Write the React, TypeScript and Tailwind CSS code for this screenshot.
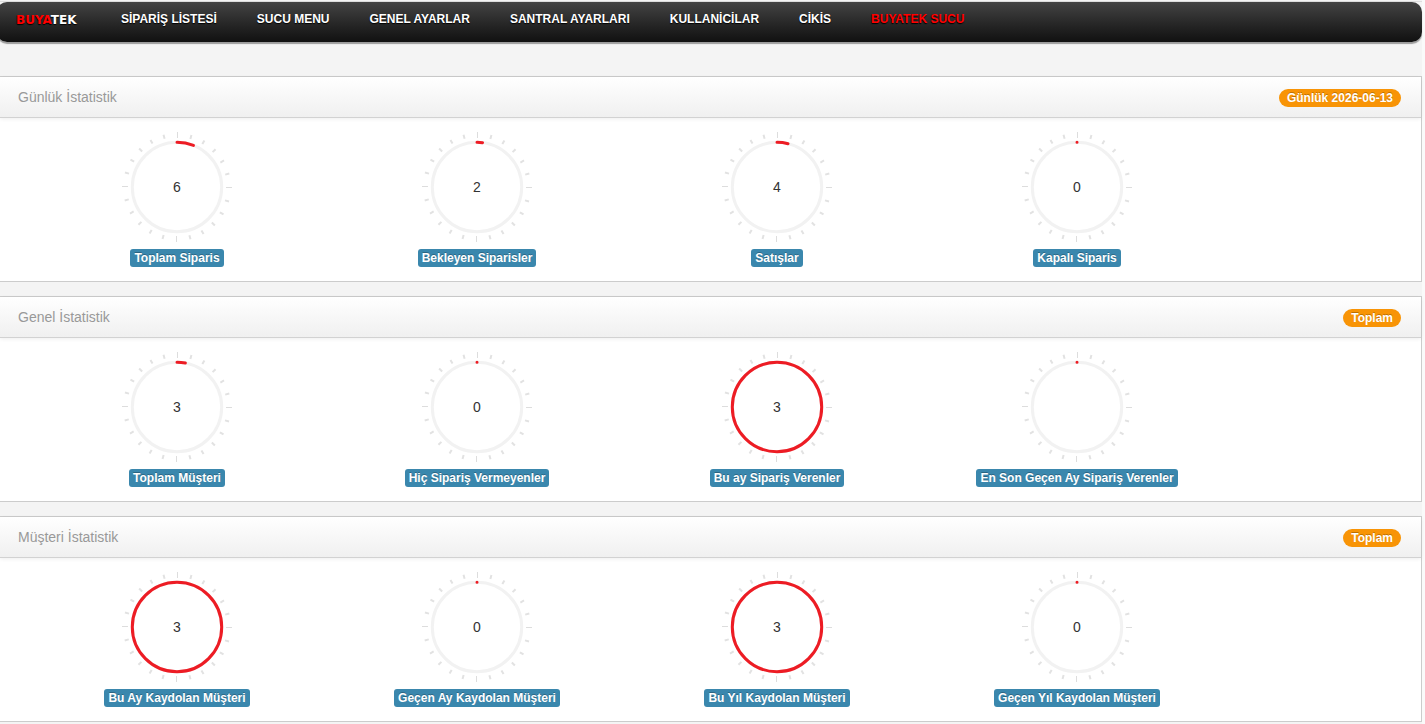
type Stat = { label: string; value: string; percent: number };
type Section = { title: string; badge: string; stats: Stat[] };

const navItems = [
  'SİPARİŞ LİSTESİ',
  'SUCU MENU',
  'GENEL AYARLAR',
  'SANTRAL AYARLARI',
  'KULLANİCİLAR',
  'CİKİS',
];

const sections: Section[] = [
  {
    title: 'Günlük İstatistik',
    badge: 'Günlük 2026-06-13',
    stats: [
      { label: 'Toplam Siparis', value: '6', percent: 6 },
      { label: 'Bekleyen Siparisler', value: '2', percent: 2 },
      { label: 'Satışlar', value: '4', percent: 4 },
      { label: 'Kapalı Siparis', value: '0', percent: 0 },
    ],
  },
  {
    title: 'Genel İstatistik',
    badge: 'Toplam',
    stats: [
      { label: 'Toplam Müşteri', value: '3', percent: 3 },
      { label: 'Hiç Sipariş Vermeyenler', value: '0', percent: 0 },
      { label: 'Bu ay Sipariş Verenler', value: '3', percent: 100 },
      { label: 'En Son Geçen Ay Sipariş Verenler', value: '', percent: 0 },
    ],
  },
  {
    title: 'Müşteri İstatistik',
    badge: 'Toplam',
    stats: [
      { label: 'Bu Ay Kaydolan Müşteri', value: '3', percent: 100 },
      { label: 'Geçen Ay Kaydolan Müşteri', value: '0', percent: 0 },
      { label: 'Bu Yıl Kaydolan Müşteri', value: '3', percent: 100 },
      { label: 'Geçen Yıl Kaydolan Müşteri', value: '0', percent: 0 },
    ],
  },
];

const ticks = Array.from({ length: 24 }, (_, i) => i);

function Gauge({ value, percent }: { value: string; percent: number }) {
  return (
    <div className="grid size-[110px] place-items-center">
      <svg viewBox="-55 -55 110 110" className="col-start-1 row-start-1 size-[110px]" aria-hidden="true">
        {ticks.map((i) => {
          const major = i % 6 === 0;
          return (
            <line
              key={i}
              x1={0.5}
              x2={0.5}
              y1={major ? -55 : -54}
              y2={major ? -49 : -49.8}
              stroke={major ? '#dddddd' : '#e2e2e2'}
              strokeWidth={major ? 1 : 2}
              transform={`rotate(${i * 15})`}
            />
          );
        })}
        <circle r="44.7" fill="none" stroke="#f2f2f2" strokeWidth="3" />
        <circle
          r="44.7"
          fill="none"
          stroke="#ed1c24"
          strokeWidth="3"
          strokeLinecap="round"
          pathLength="100"
          strokeDasharray={percent === 100 ? undefined : `${Math.max(percent, 0.01)} 200`}
          transform="rotate(-90)"
        />
      </svg>
      <span className="col-start-1 row-start-1 text-sm leading-5 text-[#333333]">{value}</span>
    </div>
  );
}

function Panel({ title, badge, stats }: Section) {
  return (
    <section className="border-y border-r border-[#cccccc] bg-white">
      <header className="flex h-[41px] items-start justify-between border-b border-[#d2d2d2] bg-linear-to-b from-white to-[#f0f0f0] pr-5 pl-[18px] shadow-[0_1px_4px_rgba(0,0,0,0.07)]">
        <h2 className="py-2.5 text-sm leading-5 text-[#999999]">{title}</h2>
        <span className="mt-3 rounded-full bg-[#f89406] px-2 py-px text-xs leading-4 font-bold text-white [text-shadow:0_-1px_0_rgba(0,0,0,0.25)]">
          {badge}
        </span>
      </header>
      <div className="flex flex-wrap pt-3.5 pb-3.5 pl-[27px]">
        {stats.map((stat) => (
          <div key={stat.label} className="flex w-[300px] flex-col items-center gap-[7px]">
            <Gauge value={stat.value} percent={stat.percent} />
            <span className="rounded-[3px] bg-[#3a87ad] px-1 py-px text-xs leading-4 font-bold whitespace-nowrap text-white [text-shadow:0_-1px_0_rgba(0,0,0,0.25)]">
              {stat.label}
            </span>
          </div>
        ))}
      </div>
    </section>
  );
}

export default function App() {
  return (
    <div className="overflow-x-hidden bg-[#fafafa] pr-[3px] font-['Liberation_Sans',Arial,sans-serif]">
      <div className="min-h-screen bg-[#f4f4f4]">
        <div className="border-t border-[#f4f4f4]">
          <div className="border-t border-[#dddddd]" />
        </div>
        <nav className="-ml-[3px] flex h-10 flex-wrap items-start rounded-[10px] bg-linear-to-b from-[#444444] to-[#111111] pt-2 pl-[19px] text-xs leading-[18px] font-bold text-white shadow-[0_2px_1px_#9c9c9c] [text-shadow:0_1px_1px_#000]">
          <a href="#" className="w-[85px] font-['DejaVu_Sans',Verdana,sans-serif] leading-5">
            <span className="text-[#ff0000]">BUYA</span>TEK
          </a>
          {navItems.map((item) => (
            <a key={item} href="#" className="px-5">
              {item}
            </a>
          ))}
          <a href="#" className="px-5 text-[#ff0000]">
            BUYATEK SUCU
          </a>
        </nav>
        <main className="flex flex-col gap-3.5 pt-[34px]">
          {sections.map((section) => (
            <Panel key={section.title} {...section} />
          ))}
        </main>
      </div>
    </div>
  );
}
